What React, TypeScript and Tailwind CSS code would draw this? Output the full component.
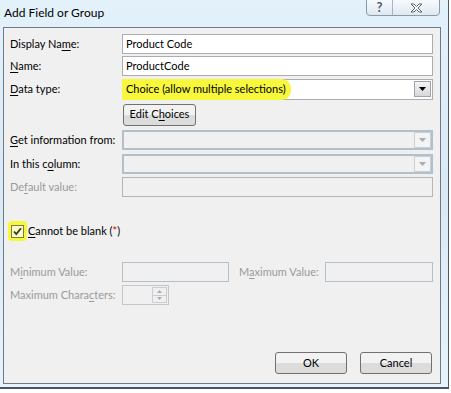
const font = { fontFamily: "Lato, 'Liberation Sans', sans-serif" };

function U({ children }: { children: string }) {
  return <span className="underline underline-offset-2">{children}</span>;
}

function Label({ children, disabled }: { children: React.ReactNode; disabled?: boolean }) {
  return (
    <div
      className={`w-[118px] shrink-0 whitespace-nowrap pl-[6px] text-[11px] ${
        disabled ? "text-[#9a9a9a]" : "text-black"
      }`}
    >
      {children}
    </div>
  );
}

function DropArrow({ disabled }: { disabled?: boolean }) {
  return (
    <div
      className={`flex h-[16px] w-[17px] items-center justify-center border ${
        disabled ? "border-[#c9d0d8] bg-[#f4f4f4]" : "border-[#9ea4ab] bg-gradient-to-b from-[#f4f4f4] to-[#d8d8d8]"
      }`}
    >
      <svg width="7" height="4" viewBox="0 0 7 4">
        <path d="M0 0h7L3.5 4z" fill={disabled ? "#a8acb0" : "#000"} />
      </svg>
    </div>
  );
}

function DisabledCombo() {
  return (
    <div className="flex h-[20px] flex-1 items-center justify-end border-2 border-[#b4bfcc] bg-[#f0f0f0]">
      <DropArrow disabled />
    </div>
  );
}

function Button({ children, className }: { children: React.ReactNode; className?: string }) {
  return (
    <div
      className={`flex h-[22px] items-center justify-center whitespace-nowrap rounded-[3px] border border-[#707070] bg-gradient-to-b from-[#f2f2f2] from-50% to-[#dcdcdc] to-50% text-[11px] text-black ${
        className ?? ""
      }`}
    >
      {children}
    </div>
  );
}

export default function App() {
  return (
    <div className="h-[393px] w-[451px] bg-white" style={font}>
      <div className="flex h-[389px] w-[449px] flex-col border-b-[2px] border-r-[1px] border-[#4a5866] bg-gradient-to-b from-[#e3f1fb] via-[#d9e9f5] to-[#e6f3fa]">
        {/* title bar */}
        <div className="flex h-[27px] shrink-0 items-start justify-between">
          <div className="pl-[4px] pt-[4px] text-[12px] text-black">Add Field or Group</div>
          <div className="mr-[8px] flex h-[17px] -translate-y-[1px] rounded-b-[4px] border border-[#8d9aa6] bg-gradient-to-b from-[#f6fafd] to-[#dfe9f2]">
            <div className="flex w-[26px] items-center justify-center border-r border-[#a8b4bf] text-[13px] font-bold text-[#4f5a64]">
              ?
            </div>
            <div className="flex w-[46px] items-center justify-center">
              <svg width="13" height="10" viewBox="0 0 13 10">
                <path
                  d="M1 1h3l2.5 2.5L9 1h3L8 5l4 4H9L6.5 6.5 4 9H1l4-4z"
                  fill="#fbfbfb"
                  stroke="#5c6670"
                  strokeWidth="1"
                />
              </svg>
            </div>
          </div>
        </div>

        {/* content panel */}
        <div className="ml-[3px] flex h-[357px] w-[438px] flex-col border border-[#6f7a84] bg-[#f0f0f0] pr-[7px] pt-[6px]">
          <div className="flex h-[20px] items-center">
            <Label>
              Display Na<U>m</U>e:
            </Label>
            <div className="flex h-[20px] flex-1 items-center border border-[#abadb3] bg-white pl-[3px] text-[11px]">
              Product Code
            </div>
          </div>
          <div className="mt-[2px] flex h-[20px] items-center">
            <Label>
              <U>N</U>ame:
            </Label>
            <div className="flex h-[20px] flex-1 items-center border border-[#abadb3] bg-white pl-[3px] text-[11px]">
              ProductCode
            </div>
          </div>
          <div className="mt-[3px] flex h-[20px] items-center">
            <Label>
              <U>D</U>ata type:
            </Label>
            <div className="flex h-[21px] flex-1 items-center justify-between border border-[#abadb3] bg-white pr-[1px] text-[11px]">
              <span className="-ml-px flex h-[21px] items-center whitespace-nowrap rounded-r-[9px] bg-[#f7f73c] pl-[4px] pr-[5px]">
                Choice (allow multiple selections)
              </span>
              <DropArrow />
            </div>
          </div>
          <div className="mt-[5px] flex h-[21px] items-center">
            <div className="w-[119px] shrink-0" />
            <Button className="h-[21px] w-[73px]">
              Edit C<U>h</U>oices
            </Button>
          </div>
          <div className="mt-[5px] flex h-[20px] items-center">
            <Label>
              <U>G</U>et information from:
            </Label>
            <DisabledCombo />
          </div>
          <div className="mt-[4px] flex h-[20px] items-center">
            <Label>
              In this c<U>o</U>lumn:
            </Label>
            <DisabledCombo />
          </div>
          <div className="mt-[3px] flex h-[20px] items-center">
            <Label disabled>
              De<U>f</U>ault value:
            </Label>
            <div className="h-[20px] flex-1 border border-[#b5b5b5] bg-[#f0f0f0]" />
          </div>

          {/* required checkbox */}
          <div className="mt-[24px] flex h-[20px] items-center whitespace-nowrap pl-[4px] text-[11px]">
            <div className="flex h-[20px] w-[19px] items-center justify-center rounded-[4px] bg-[#f7f73c]">
              <div className="flex h-[13px] w-[13px] items-center justify-center border border-[#7b7b4a] bg-[#fbfbc8]">
                <svg width="9" height="9" viewBox="0 0 9 9">
                  <path d="M1 4.5l2.3 2.6L8 1.2" fill="none" stroke="#3a3a20" strokeWidth="1.8" />
                </svg>
              </div>
            </div>
            <span className="ml-[1px]">
              <U>C</U>annot be blank (<span className="text-[#e00000]">*</span>)
            </span>
          </div>

          {/* min / max */}
          <div className="mt-[21px] flex h-[20px] items-center">
            <Label disabled>
              M<U>i</U>nimum Value:
            </Label>
            <div className="h-[20px] w-[107px] border border-[#b4bfcc] bg-[#f0f0f0]" />
            <div className="w-[96px] whitespace-nowrap pl-[10px] text-[11px] text-[#9a9a9a]">
              M<U>a</U>ximum Value:
            </div>
            <div className="h-[20px] flex-1 border border-[#b4bfcc] bg-[#f0f0f0]" />
          </div>
          <div className="mt-[3px] flex h-[20px] items-center">
            <Label disabled>
              Maximum Chara<U>c</U>ters:
            </Label>
            <div className="flex h-[20px] w-[47px] items-center justify-end border border-[#c6c6c6] bg-[#f0f0f0] pr-[1px]">
              <div className="flex h-[16px] w-[15px] flex-col border border-[#c9ced4]">
                <div className="flex flex-1 items-center justify-center border-b border-[#c9ced4]">
                  <svg width="5" height="3" viewBox="0 0 5 3">
                    <path d="M0 3h5L2.5 0z" fill="#a8acb0" />
                  </svg>
                </div>
                <div className="flex flex-1 items-center justify-center">
                  <svg width="5" height="3" viewBox="0 0 5 3">
                    <path d="M0 0h5L2.5 3z" fill="#a8acb0" />
                  </svg>
                </div>
              </div>
            </div>
          </div>

          <div className="mb-[9px] mt-auto flex justify-end gap-[13px] pr-[1px]">
            <Button className="w-[72px]">OK</Button>
            <Button className="w-[72px]">Cancel</Button>
          </div>
        </div>
      </div>
    </div>
  );
}
